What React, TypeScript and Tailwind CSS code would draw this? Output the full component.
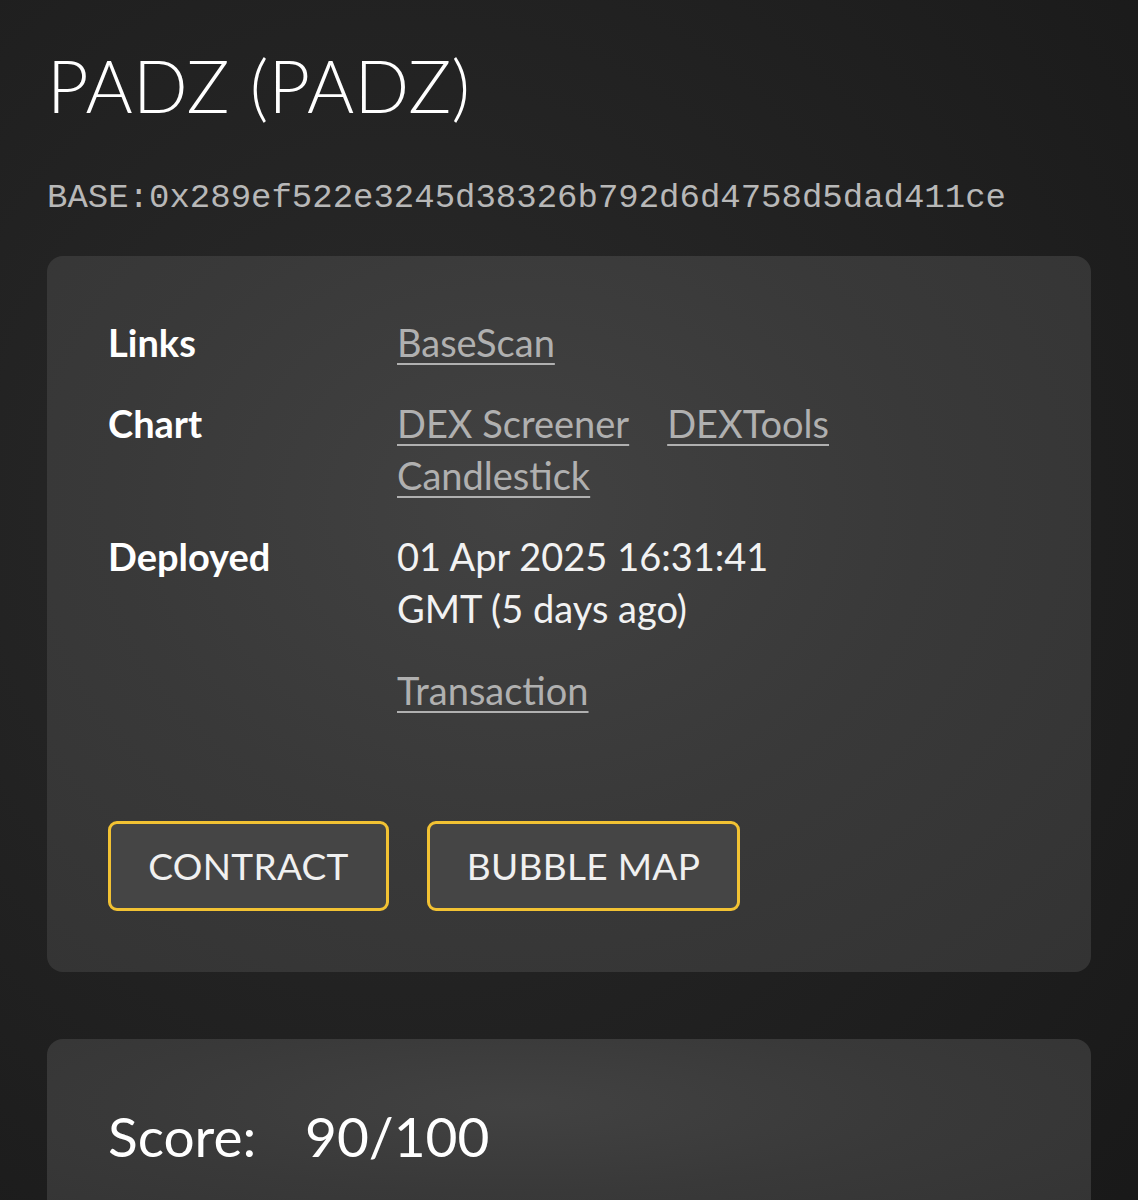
import React from "react";

const font = { fontFamily: "Lato, 'Noto Sans', sans-serif" };

export default function App() {
  return (
    <div
      className="min-h-[1200px] w-full px-[47px] pt-[40px] pb-10 text-white bg-[radial-gradient(ellipse_at_35%_40%,#2a2a2a_0%,#222222_45%,#181818_100%)]"
      style={font}
    >
      <h1 className="text-[72px] leading-[90px] font-light text-white tracking-[0.3px]">PADZ (PADZ)</h1>
      <div
        className="mt-[48px] text-[34px] leading-[40px] text-[#b8b8b8]"
        style={{ fontFamily: "'Liberation Mono', 'Courier New', monospace" }}
      >
        BASE:0x289ef522e3245d38326b792d6d4758d5dad411ce
      </div>

      <div className="mt-[38px] rounded-[16px] bg-[radial-gradient(ellipse_at_45%_35%,#424242_0%,#393939_50%,#333333_100%)] px-[61px] pt-[60px] pb-[61px]">
        <div className="grid grid-cols-[289px_1fr] gap-y-[29px] text-[38px] leading-[52px]">
          <div className="font-bold text-white">Links</div>
          <div>
            <a className="text-[#b0b0b0] underline decoration-[2px] underline-offset-[6px]">BaseScan</a>
          </div>

          <div className="font-bold text-white">Chart</div>
          <div className="flex flex-wrap gap-x-[38px]">
            <a className="text-[#b0b0b0] underline decoration-[2px] underline-offset-[6px]">DEX Screener</a>
            <a className="text-[#b0b0b0] underline decoration-[2px] underline-offset-[6px]">DEXTools</a>
            <a className="text-[#b0b0b0] underline decoration-[2px] underline-offset-[6px] basis-full">
              <span className="underline decoration-[2px] underline-offset-[6px]">Candlestick</span>
            </a>
          </div>

          <div className="font-bold text-white">Deployed</div>
          <div className="text-[#f2f2f2]">
            <div className="w-[420px]">01 Apr 2025 16:31:41 GMT (5 days ago)</div>
            <div className="mt-[30px]">
              <a className="text-[#b0b0b0] underline decoration-[2px] underline-offset-[6px]">Transaction</a>
            </div>
          </div>
        </div>

        <div className="mt-[105px] flex gap-[38px]">
          <button className="h-[90px] w-[281px] rounded-[9px] border-[3px] border-[#f2c233] bg-[#454545] text-[37px] text-[#f0f0f0] tracking-[0.3px]">
            CONTRACT
          </button>
          <button className="h-[90px] w-[313px] rounded-[9px] border-[3px] border-[#f2c233] bg-[#454545] text-[37px] text-[#f0f0f0] tracking-[0.3px]">
            BUBBLE MAP
          </button>
        </div>
      </div>

      <div className="mt-[67px] rounded-[16px] bg-[radial-gradient(ellipse_at_45%_35%,#424242_0%,#393939_50%,#333333_100%)] px-[61px] pt-[65px] pb-[60px]">
        <div className="flex text-[55px] leading-[64px] text-white">
          <span className="w-[197px]">Score:</span>
          <span>90/100</span>
        </div>
      </div>
    </div>
  );
}
